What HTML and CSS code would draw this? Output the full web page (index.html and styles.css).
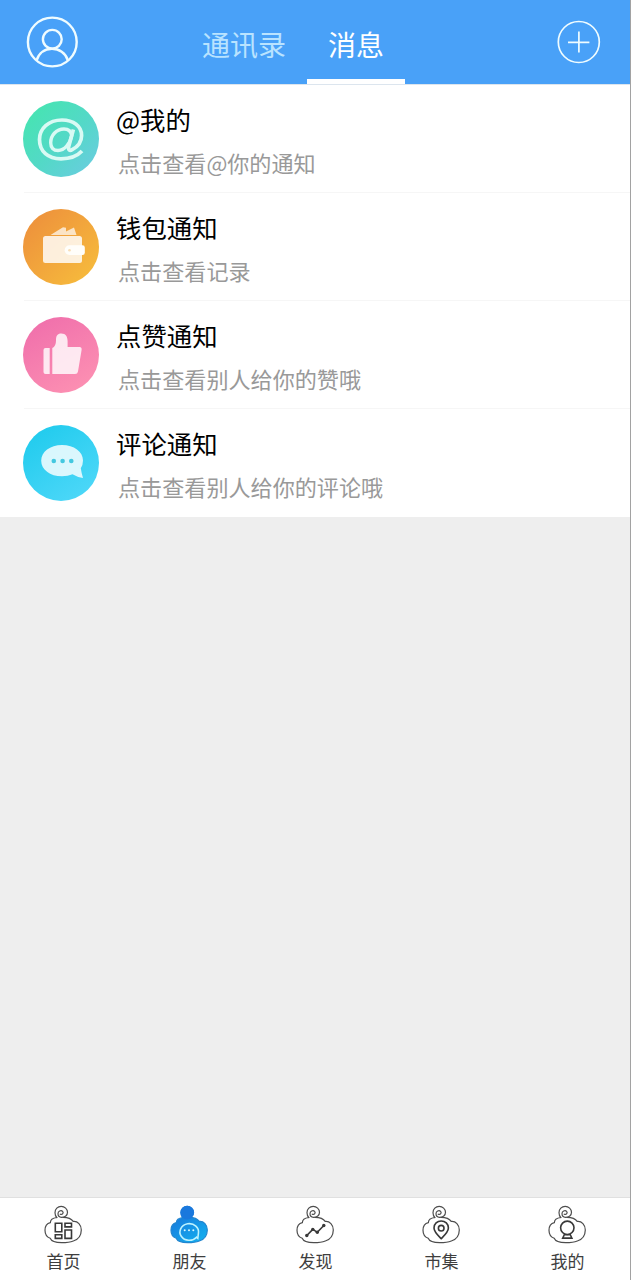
FILE: index.html
```html
<!DOCTYPE html>
<html lang="zh-CN">
<head>
<meta charset="utf-8">
<title>消息</title>
<link rel="stylesheet" href="styles.css">
</head>
<body>
<svg class="defs" width="0" height="0">
  <defs>
    <linearGradient id="blue" x1="0" y1="0" x2="1" y2="1"><stop offset="0" stop-color="#1878dc"/><stop offset="1" stop-color="#12b4f0"/></linearGradient>
    <symbol id="cloud" viewBox="0 0 40 44">
      <path d="M20 14.3C25 14.3 28.7 16 30.2 18.4C34.6 17.8 38.4 22 38.3 27C38.2 32.3 35 36.6 30.3 38C27 39.4 23.5 39.7 18.7 39.7C13.5 39.6 8.5 38.7 7.2 35.3C3.8 34 2 30.8 2 27.2C2 23 4.2 20.3 7.4 19.6C7.4 17 9.8 15 13.8 14.5"/>
      <path class="curl" d="M17.2 11.2C19.5 12 20.9 9.8 19.6 8.4C18 6.8 15 8.2 15 10.7C15 12.7 16.3 14.1 18.5 14.3C22 14.4 24.5 12.4 24.5 9.3C24.5 6 21.6 3.4 18.2 3.4C14.7 3.4 12 6 12 9.7C12 11.6 12.6 13.2 13.8 14.5"/>
    </symbol>
  </defs>
</svg>
<div class="app">
  <header class="header">
    <svg class="user" viewBox="0 0 52 52"><circle cx="26.3" cy="26" r="24.4"/><circle cx="26.3" cy="23.3" r="9.4"/><path d="M10.5 44.5C13 37 19 32.8 26 32.8S39.5 37 42 44.5"/></svg>
    <nav class="tabs"><a class="tab">通讯录</a><a class="tab current">消息</a></nav>
    <svg class="add" viewBox="0 0 44 44"><circle cx="21.8" cy="22" r="20.5"/><path d="M11 22.3h21.4M21.9 11.5v21"/></svg>
  </header>
  <main class="list">
    <section class="row">
      <div class="badge mention"><svg viewBox="0 0 76 76"><path class="at" d="M50.4 28.5L45.8 45.2C44.8 49.4 47 50 49.2 48.7C54.6 45.8 58.6 40.8 58.6 34.5C58.6 25 50.4 19 39 19C25.5 19 16.5 27.5 16.5 38.5C16.5 50.5 25 57.8 38 57.8C47 57.8 54.5 54.8 59 50"/><path class="at loop" d="M48.7 34.5C48 30 45 28 41 28C33 28 27.7 34.8 27.7 41.7C27.7 46.7 30.5 49.5 35 49.5C41.5 49.5 47 43 48.7 34.5Z"/></svg></div>
      <div class="copy"><h2>@我的</h2><p>点击查看@你的通知</p></div>
    </section>
    <section class="row">
      <div class="badge wallet"><svg viewBox="0 0 76 76"><path class="pale" d="M27.5 26L40 18.2L43 18.8V22.5L51 18.5L53.5 26Z"/><rect class="soft" x="20" y="27" width="39" height="27" rx="2.5"/><path class="solid" d="M46.5 36.3H59.5Q61.8 36.3 61.8 38.5V43.8Q61.8 46 59.5 46H46.5a4.8 4.8 0 0 1 0-9.7Z"/><circle cx="46.5" cy="41.2" r="1.3" fill="#f9dfb8"/></svg></div>
      <div class="copy"><h2>钱包通知</h2><p>点击查看记录</p></div>
    </section>
    <section class="row">
      <div class="badge like"><svg viewBox="0 0 76 76"><path class="soft" d="M22.5 31H26.7V57H22.5Q20.5 57 20.5 55V33Q20.5 31 22.5 31ZM29.3 57V31Q33 29.5 33 23.5C33 18.5 34.5 16.5 38.2 16.5C43 16.5 44.6 20 44.6 24V30H56.5Q59 30 58.6 33L55 54.5Q54.6 57 52 57Z"/></svg></div>
      <div class="copy"><h2>点赞通知</h2><p>点击查看别人给你的赞哦</p></div>
    </section>
    <section class="row">
      <div class="badge comment"><svg viewBox="0 0 76 76"><path class="soft" d="M39 20C51 20 60 26.5 60 35.5Q60 40 57.8 43.2Q58.5 48 60 53Q54 52 49.5 49.2Q45 51.3 39 51.3C27 51.3 18.2 44.5 18.2 35.7S27 20 39 20Z"/><g fill="#44c8e0"><circle cx="30.8" cy="36" r="2.3"/><circle cx="39.6" cy="36" r="2.3"/><circle cx="48.3" cy="36" r="2.3"/></g></svg></div>
      <div class="copy"><h2>评论通知</h2><p>点击查看别人给你的评论哦</p></div>
    </section>
  </main>
  <footer class="nav">
    <a class="item"><svg viewBox="0 0 40 44"><use href="#cloud"/><g class="glyph"><path d="M12.3 20.2h6.5v8.6h-6.5zM22 20.2h6.5v3.7H22zM12.3 31.7h6.5v3.7h-6.5zM22 27h6.5v8.4H22z"/></g></svg><span>首页</span></a>
    <a class="item active"><svg viewBox="0 0 40 44"><use href="#cloud"/><circle class="head" cx="18.2" cy="9.6" r="6.9"/><path class="talk" d="M27.5 34.2A9.3 8.3 0 1 1 29.4 30.5L28.8 35.4Z"/><g class="dots"><circle cx="15.7" cy="27.2" r="1"/><circle cx="20" cy="27.2" r="1"/><circle cx="24.3" cy="27.2" r="1"/></g></svg><span>朋友</span></a>
    <a class="item"><svg viewBox="0 0 40 44"><use href="#cloud"/><path class="glyph" d="M11.8 32.5L17.8 26.4L22.3 29.3L28.8 22.5"/><g class="points"><circle cx="11.8" cy="32.5" r="1.7"/><circle cx="17.8" cy="26.4" r="1.7"/><circle cx="22.3" cy="29.3" r="1.7"/><circle cx="28.8" cy="22.5" r="1.7"/></g></svg><span>发现</span></a>
    <a class="item"><svg viewBox="0 0 40 44"><use href="#cloud"/><g class="glyph"><path d="M20.2 35.7C16 31.5 13 28.8 13 25C13 20.8 16.2 18 20.2 18S27.4 20.8 27.4 25C27.4 28.8 24.4 31.5 20.2 35.7Z"/><circle cx="20.2" cy="25.2" r="2.8"/></g></svg><span>市集</span></a>
    <a class="item"><svg viewBox="0 0 40 44"><use href="#cloud"/><g class="glyph"><circle cx="20.3" cy="24.8" r="6.7"/><path d="M17.3 31.7h6l1.6 3.4h-9.2z"/></g></svg><span>我的</span></a>
  </footer>
</div>
</body>
</html>
```
FILE: styles.css
```css
* { box-sizing: border-box; }
body { margin: 0; font-family: "Noto Sans CJK SC", sans-serif; }
.defs { display: block; }
.app { height: 1280px; display: flex; flex-direction: column; background: #eee; border-right: 1px solid #a2a2a2; }
svg { display: block; }

.header { height: 85px; flex: none; display: flex; justify-content: space-between; background: #49a1f8; border-bottom: 1px solid #dce5ee; padding: 0 29px 0 26px; }
.user, .add { fill: none; stroke: #effcff; }
.user { width: 52px; height: 52px; margin-top: 16px; stroke-width: 2.4; }
.add { width: 44px; height: 44px; margin-top: 20px; stroke-width: 1.7; }
.tabs { display: flex; margin: 0 auto 0 103px; }
.tab { flex: none; width: 126px; height: 84px; padding-top: 24px; text-align: center; font-size: 28px; line-height: 40px; color: #b9e3ff; }
.tab.current { width: 98px; color: #fff; border-bottom: 5px solid #fff; }

.list { background: #fff; flex: none; }
.row { height: 108px; display: flex; gap: 17px; padding: 16px 0 0 23px; background: linear-gradient(#f6f6f6, #f6f6f6) 24px 100% / 100% 1px no-repeat; }
.row:last-child { background: none; }
.badge { width: 76px; height: 76px; border-radius: 50%; flex: none; }
.mention { background: linear-gradient(135deg, #48e3b4 15%, #54d8c8 55%, #6dcbe3); }
.wallet { background: linear-gradient(135deg, #ee943c 15%, #f6b93c 88%); }
.like { background: linear-gradient(150deg, #f172ac 15%, #fc8fb2 88%); }
.comment { background: linear-gradient(145deg, #24ccee 15%, #4cd7f8 88%); }
.at { fill: none; stroke: #d9faf4; stroke-width: 3.7; stroke-linejoin: round; }
.at.loop { stroke-width: 3.4; }
.soft { fill: #fff; fill-opacity: .82; }
.pale { fill: #fff; fill-opacity: .7; }
.solid { fill: #fffefa; }
.copy h2, .copy p { margin: 0; font-weight: 400; white-space: nowrap; }
.copy h2 { font-size: 25.4px; line-height: 38px; margin-top: -1px; color: #000; }
.copy p { font-size: 22.1px; line-height: 32px; margin: 8px 0 0 2px; color: #999; }

.nav { margin-top: auto; height: 83px; border-top: 1px solid #e0e0e0; background: #fff; display: flex; }
.item { flex: 1; display: flex; flex-direction: column; align-items: center; padding-top: 5px; font-size: 17px; line-height: 24px; color: #3e3e3e; }
.item svg { width: 40px; height: 44px; fill: none; stroke: #4d4d4d; stroke-width: 1.2; stroke-linecap: round; }
.item span { margin-top: 2px; padding-left: 1px; }
.item .glyph { fill: none; stroke: #383838; stroke-width: 1.6; }
.curl { fill: none; }
.points { fill: #383838; stroke: none; }
.item.active svg { fill: url(#blue); stroke: #2386cf; }
.head { fill: #1a78dd; stroke: none; }
.talk { fill: none; stroke: #bdf3ff; stroke-width: 1.6; }
.dots { fill: #d7f8ff; stroke: none; }
```
